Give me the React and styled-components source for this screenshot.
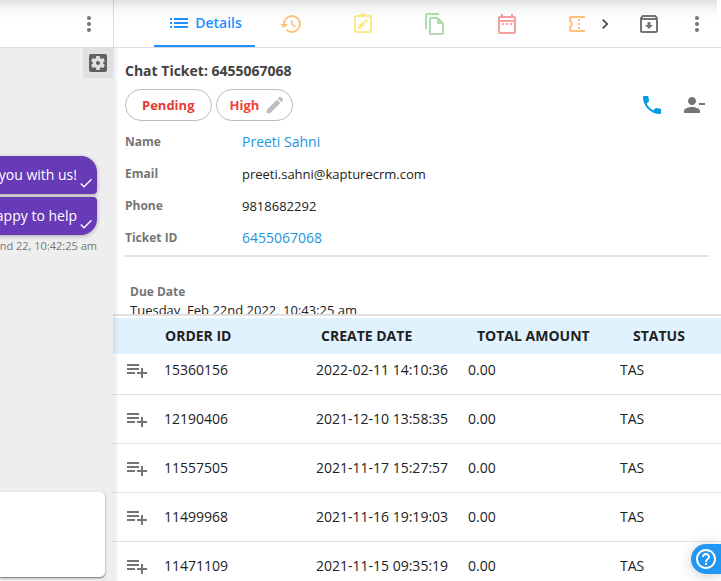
import React from "react";
import styled, { createGlobalStyle, css } from "styled-components";
import {
  MdList,
  MdHistory,
  MdOutlineDateRange,
  MdOutlineConfirmationNumber,
  MdChevronRight,
  MdOutlineArchive,
  MdMoreVert,
  MdSettingsApplications,
  MdEdit,
  MdPhone,
  MdHelpOutline,
  MdCheck,
} from "react-icons/md";

const GlobalStyle = createGlobalStyle`
  *, *::before, *::after { box-sizing: border-box; }
  body {
    margin: 0;
    background: #fff;
    color: #212121;
    font-family: "Open Sans", "Noto Sans", sans-serif;
    font-size: 14px;
  }
  button, textarea { font: inherit; }
  svg { display: block; flex: none; }
`;

const Page = styled.div`
  display: flex;
  height: 100vh;
  overflow: hidden;
  position: relative;
`;

const TopShade = styled.div`
  position: absolute;
  top: 0;
  left: 0;
  right: 4px;
  height: 20px;
  pointer-events: none;
  background: linear-gradient(
    rgba(0, 0, 0, 0.12),
    rgba(0, 0, 0, 0.06) 30%,
    rgba(0, 0, 0, 0.02) 65%,
    transparent
  );
`;

const ChatPane = styled.section`
  flex: 0 0 113px;
  display: flex;
  flex-direction: column;
  min-width: 0;
  background: #eee;
`;

const ChatHeader = styled.header`
  height: 48px;
  display: flex;
  justify-content: flex-end;
  background: #fff;
  border-bottom: 1px solid #dcdcdc;
`;

const IconButton = styled.button`
  display: flex;
  align-items: center;
  justify-content: center;
  flex: none;
  width: ${(p) => p.$width || 48}px;
  padding: 0;
  border: 0;
  background: transparent;
  color: ${(p) => p.$color || "#757575"};
  cursor: pointer;
`;

const SettingsButton = styled(IconButton)`
  align-self: flex-end;
  height: 30px;
  background: #e0e0e0;
  color: #616161;
`;

const Messages = styled.div`
  flex: 1;
  display: flex;
  flex-direction: column;
  align-items: flex-end;
  gap: 3px;
  padding: 78px 16px 0 0;
  overflow: hidden;
`;

const Bubble = styled.div`
  display: flex;
  flex: none;
  align-items: center;
  gap: 1px;
  height: 38px;
  padding: 0 3px 0 40px;
  background: #673ab7;
  color: #fff;
  line-height: 20px;
  white-space: nowrap;
  border-radius: ${(p) => (p.$last ? "4px 4px 16px 16px" : "16px 16px 4px 4px")};
  box-shadow: 0 1px 4px rgba(0, 0, 0, 0.3);

  svg {
    align-self: flex-end;
    margin-bottom: 3px;
  }
`;

const Stamp = styled.time`
  color: #757575;
  font-size: 11px;
  line-height: 16px;
  white-space: nowrap;
`;

const Composer = styled.textarea`
  height: 85px;
  margin: 0 8px 4px 0;
  padding: 8px;
  border: 0;
  border-radius: 0 5px 5px 0;
  background: #fff;
  resize: none;
  outline: none;
  box-shadow: 0 1px 2px rgba(0, 0, 0, 0.55);
`;

const TicketPane = styled.main`
  flex: 1;
  min-width: 0;
  display: flex;
  flex-direction: column;
  position: relative;

  &::before {
    content: "";
    position: absolute;
    top: 48px;
    bottom: 0;
    left: 0;
    width: 6px;
    pointer-events: none;
    background: linear-gradient(90deg, rgba(0, 0, 0, 0.09), transparent);
  }
`;

const TabBar = styled.nav`
  display: flex;
  flex: none;
  height: 48px;
  padding-left: 40px;
  border-left: 1px solid #dcdcdc;
  border-bottom: 1px solid #dcdcdc;
`;

const Tabs = styled.div`
  flex: 1;
  min-width: 0;
  display: flex;
  overflow: hidden;
`;

const Tab = styled.button`
  display: flex;
  flex: none;
  align-items: center;
  justify-content: center;
  gap: 4px;
  width: ${(p) => (p.$active ? 101 : 72)}px;
  padding: 0;
  border: 0;
  background: transparent;
  color: ${(p) => p.$color};
  font-size: 14px;
  line-height: 20px;
  font-weight: 600;
  cursor: pointer;
  ${(p) =>
    p.$active &&
    css`
      padding-bottom: 2px;
      border-top: 2px solid transparent;
      border-bottom: 2px solid #1e90ff;
    `}
`;

const Details = styled.section`
  flex: 0 0 268px;
  padding: 12px 12px 0;
  overflow: hidden;
  border-bottom: 2px solid #e0e0e0;
`;

const Title = styled.h1`
  margin: 0;
  color: #424242;
  font-size: 14px;
  line-height: 22px;
  font-weight: 700;
`;

const ActionRow = styled.div`
  display: flex;
  justify-content: space-between;
  margin-top: 7px;
  padding-right: 3px;
`;

const Group = styled.div`
  display: flex;
  gap: ${(p) => p.$gap}px;
`;

const Pill = styled.button`
  display: flex;
  align-items: center;
  gap: 5px;
  height: 32px;
  padding: ${(p) => (p.$editable ? "0 6px 0 12px" : "0 17px 0 16px")};
  border: 1px solid #bdbdbd;
  border-radius: 16px;
  background: #fff;
  color: ${(p) => p.$color};
  font-size: 13px;
  font-weight: 700;
  cursor: pointer;

  svg { color: #bdbdbd; }
`;

const Fields = styled.dl`
  display: grid;
  grid-template-columns: 117px 1fr;
  grid-auto-rows: 32px;
  align-items: center;
  margin: 5px 0 0;
  padding-bottom: 1px;
  border-bottom: 2px solid #e0e0e0;
`;

const Label = styled.dt`
  color: #757575;
  font-size: 12px;
  line-height: 16px;
  font-weight: 700;
`;

const Value = styled.dd`
  margin: 0;
  font-size: 13px;
  line-height: 20px;

  a {
    color: #1e96dc;
    font-size: 14px;
    text-decoration: none;
  }
`;

const DueDate = styled.dl`
  margin: 27px 0 0 5px;
`;

const Orders = styled.section`
  flex: 1;
  min-height: 0;
  padding-top: 2px;
  overflow: hidden;
`;

const Table = styled.table`
  display: block;
  min-width: 676px;
`;

const HeadRow = styled.tr`
  display: grid;
  grid-template-columns: 52px repeat(4, 1fr);
  align-items: center;
  height: 36px;
  background: #e1f2ff;
`;

const HeadCell = styled.th`
  padding: 0 0 2px;
  text-align: left;
  font-weight: 700;
  font-size: 14px;
`;

const TableHead = styled.thead`
  display: block;
  position: relative;
  z-index: -1;
`;

const TableBody = styled.tbody`
  display: block;
  margin-top: -8px;
  position: relative;
  z-index: -2;
`;

const BodyRow = styled.tr`
  display: grid;
  grid-template-columns: 51px repeat(4, 1fr);
  align-items: center;
  height: 49px;
  padding-right: 17px;
  border-bottom: 1px solid #e0e0e0;
`;

const Cell = styled.td`
  padding: 0 0 2px;
  white-space: nowrap;
`;

const IconCell = styled.td`
  padding: 0;
`;

const HelpButton = styled.button`
  position: fixed;
  right: 0;
  bottom: 7px;
  height: 30px;
  padding: 0 3px;
  border: 0;
  border-radius: 15px 0 0 15px;
  background: #2196f3;
  color: #fff;
  box-shadow: 0 2px 14px rgba(0, 0, 0, 0.2);
  cursor: pointer;
`;

const Glyph = ({ children }) => (
  <svg width="24" height="24" viewBox="0 0 24 24" fill="currentColor" aria-hidden="true">
    {children}
  </svg>
);

const NoteIcon = () => (
  <Glyph>
    <path
      fillRule="evenodd"
      d="M19 3h-4.200C14.400 1.800 13.300 1 12 1s-2.400.8-2.800 2H5c-1.100 0-2 .9-2 2v14c0 1.100.9 2 2 2h14c1.100 0 2-.9 2-2V5c0-1.100-.9-2-2-2zM5 5h14v14H5V5z"
    />
    <path d="M7 14.500V17h2.500l5.200-5.200-2.500-2.500L7 14.500zM16.800 9.700c.3-.3.3-.7 0-1l-1.500-1.500c-.3-.3-.7-.3-1 0l-1.300 1.300 2.500 2.500 1.300-1.300z" />
  </Glyph>
);

const CopyIcon = () => (
  <Glyph>
    <path d="M16 1H4c-1.100 0-2 .9-2 2v14h2V3h12V1zm-1 4H8c-1.100 0-1.990.9-1.990 2L6 21c0 1.100.89 2 1.990 2H19c1.100 0 2-.9 2-2V11l-6-6zM8 21V7h6v5h5v9H8z" />
  </Glyph>
);

const PersonMinusIcon = () => (
  <Glyph>
    <path d="M14 8c0-2.210-1.790-4-4-4S6 5.790 6 8s1.790 4 4 4 4-1.790 4-4zm3 2v2h6v-2h-6zM2 18v2h16v-2c0-2.660-5.330-4-8-4s-8 1.340-8 4z" />
  </Glyph>
);

const ListAddIcon = () => (
  <Glyph>
    <path d="M14 10H2v2h12v-2zm0-4H2v2h12V6zm4 8v-4h-2v4h-4v2h4v4h2v-4h4v-2h-4zM2 16h8v-2H2v2z" />
  </Glyph>
);

const iconTabs = [
  { label: "History", color: "#ffc27d", icon: <MdHistory size={24} /> },
  { label: "Notes", color: "#ffe88c", icon: <NoteIcon /> },
  { label: "Copies", color: "#aedcb0", icon: <CopyIcon /> },
  { label: "Calendar", color: "#f4a09b", icon: <MdOutlineDateRange size={24} /> },
  { label: "Coupons", color: "#ffc27d", icon: <MdOutlineConfirmationNumber size={24} /> },
];

const columns = ["ORDER ID", "CREATE DATE", "TOTAL AMOUNT", "STATUS"];

const orders = [
  ["15360156", "2022-02-11 14:10:36", "0.00", "TAS"],
  ["12190406", "2021-12-10 13:58:35", "0.00", "TAS"],
  ["11557505", "2021-11-17 15:27:57", "0.00", "TAS"],
  ["11499968", "2021-11-16 19:19:03", "0.00", "TAS"],
  ["11471109", "2021-11-15 09:35:19", "0.00", "TAS"],
];

export default function App() {
  return (
    <Page>
      <GlobalStyle />
      <ChatPane>
        <ChatHeader>
          <IconButton aria-label="Chat options">
            <MdMoreVert size={24} />
          </IconButton>
        </ChatHeader>
        <SettingsButton $width={30} aria-label="Chat settings">
          <MdSettingsApplications size={24} />
        </SettingsButton>
        <Messages>
          <Bubble>
            you with us!
            <MdCheck size={16} />
          </Bubble>
          <Bubble $last>
            appy to help
            <MdCheck size={16} />
          </Bubble>
          <Stamp>nd 22, 10:42:25 am</Stamp>
        </Messages>
        <Composer aria-label="Message" />
      </ChatPane>

      <TicketPane>
        <TabBar>
          <Tabs role="tablist">
            <Tab role="tab" aria-selected="true" $active $color="#1e90ff">
              <MdList size={24} />
              Details
            </Tab>
            {iconTabs.map((t) => (
              <Tab key={t.label} role="tab" aria-label={t.label} $color={t.color}>
                {t.icon}
              </Tab>
            ))}
          </Tabs>
          <IconButton $width={40} $color="#424242" aria-label="More tabs">
            <MdChevronRight size={20} />
          </IconButton>
          <IconButton aria-label="Archive">
            <MdOutlineArchive size={24} />
          </IconButton>
          <IconButton aria-label="Ticket options">
            <MdMoreVert size={24} />
          </IconButton>
        </TabBar>

        <Details>
          <Title>Chat Ticket: 6455067068</Title>
          <ActionRow>
            <Group $gap={4}>
              <Pill $color="#e53935">Pending</Pill>
              <Pill $color="#f44336" $editable>
                High
                <MdEdit size={22} />
              </Pill>
            </Group>
            <Group $gap={18}>
              <IconButton $width={24} $color="#039be5" aria-label="Call">
                <MdPhone size={24} />
              </IconButton>
              <IconButton $width={24} aria-label="Remove contact">
                <PersonMinusIcon />
              </IconButton>
            </Group>
          </ActionRow>
          <Fields>
            <Label>Name</Label>
            <Value><a href="#contact">Preeti Sahni</a></Value>
            <Label>Email</Label>
            <Value>preeti.sahni@kapturecrm.com</Value>
            <Label>Phone</Label>
            <Value>9818682292</Value>
            <Label>Ticket ID</Label>
            <Value><a href="#ticket">6455067068</a></Value>
          </Fields>
          <DueDate>
            <Label>Due Date</Label>
            <Value>Tuesday, Feb 22nd 2022, 10:43:25 am</Value>
          </DueDate>
        </Details>

        <Orders>
          <Table>
            <TableHead>
              <HeadRow>
                <IconCell />
                {columns.map((c) => (
                  <HeadCell key={c} scope="col">{c}</HeadCell>
                ))}
              </HeadRow>
            </TableHead>
            <TableBody>
              {orders.map((row) => (
                <BodyRow key={row[0]}>
                  <IconCell>
                    <IconButton aria-label={`Add order ${row[0]}`}>
                      <ListAddIcon />
                    </IconButton>
                  </IconCell>
                  {row.map((value, i) => (
                    <Cell key={i}>{value}</Cell>
                  ))}
                </BodyRow>
              ))}
            </TableBody>
          </Table>
        </Orders>
      </TicketPane>

      <TopShade />
      <HelpButton aria-label="Help">
        <MdHelpOutline size={24} />
      </HelpButton>
    </Page>
  );
}
